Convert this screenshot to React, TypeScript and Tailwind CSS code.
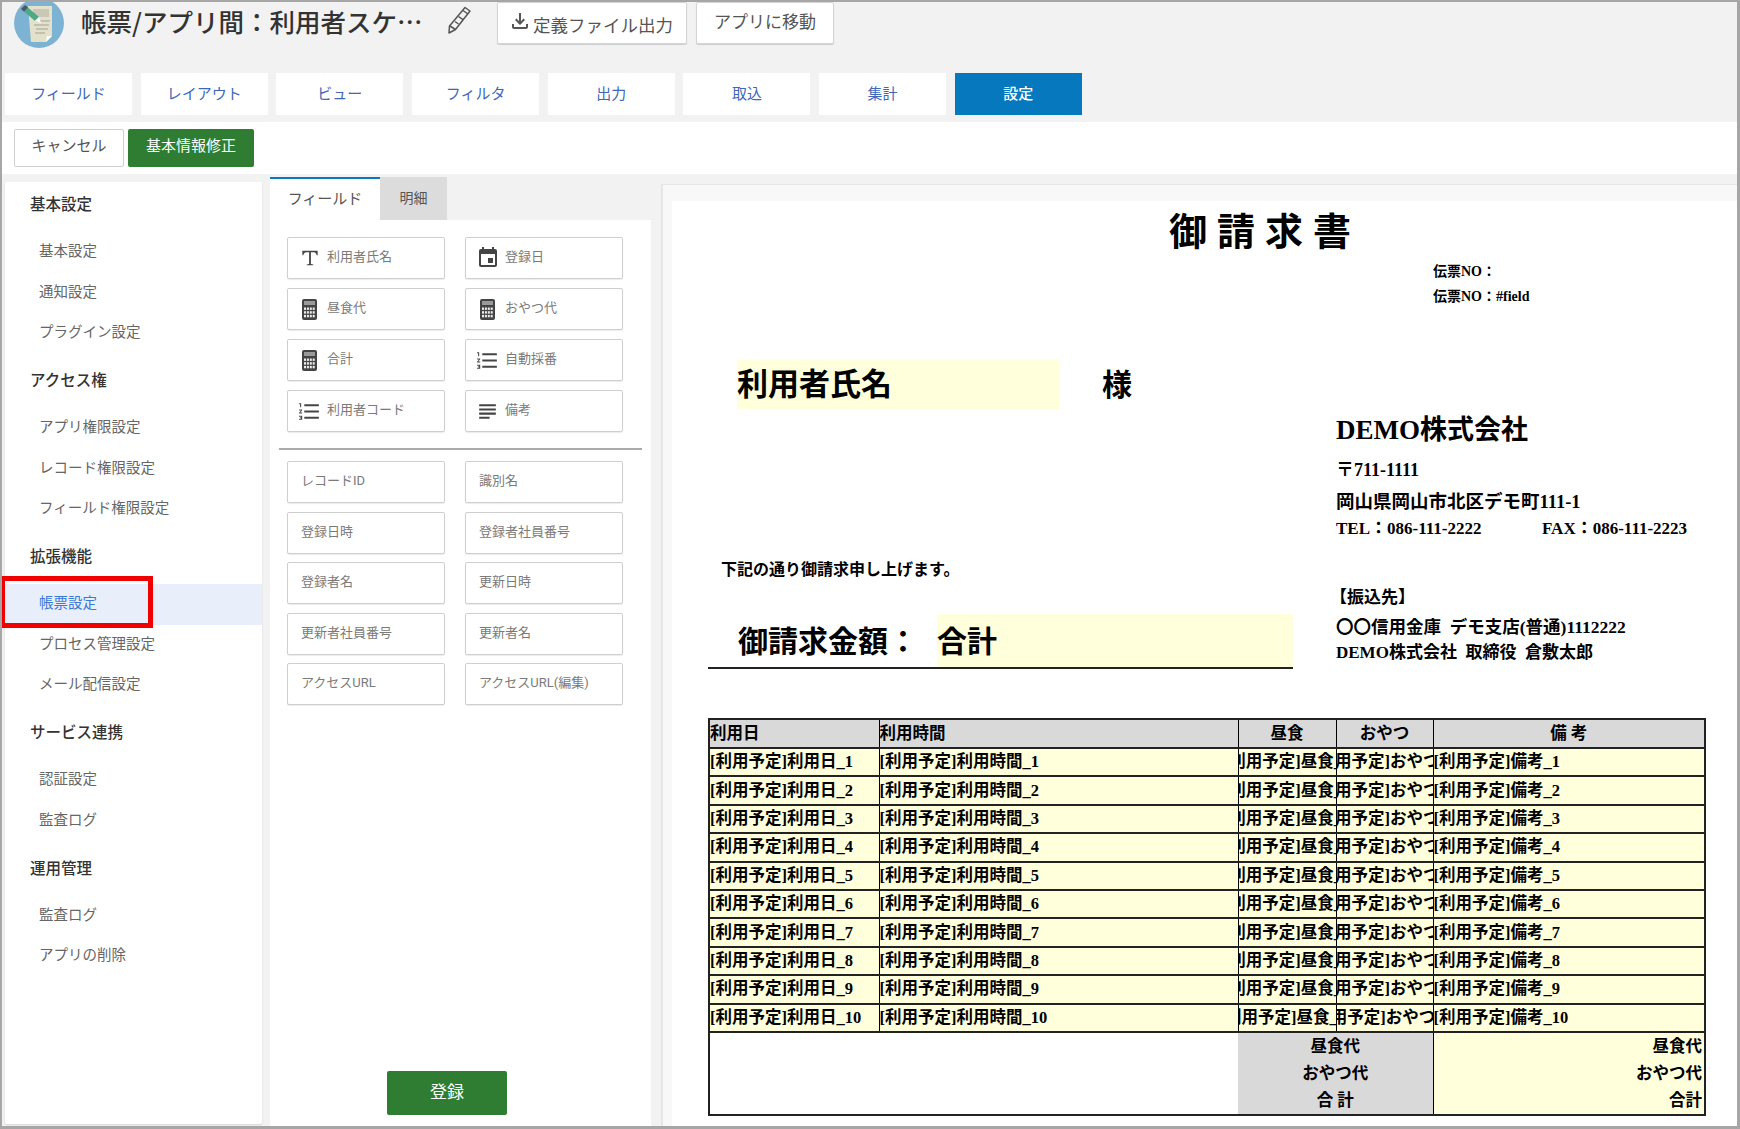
import { MdEvent, MdFormatListNumbered, MdOutlineFileDownload, MdSubject } from "react-icons/md";
import type { ReactNode } from "react";

const doc = "font-['Liberation_Serif','Noto_Sans_CJK_JP',serif] font-bold text-black";

const tabs = ["フィールド", "レイアウト", "ビュー", "フィルタ", "出力", "取込", "集計", "設定"];

const menu: { title: string; items: string[] }[] = [
  { title: "基本設定", items: ["基本設定", "通知設定", "プラグイン設定"] },
  { title: "アクセス権", items: ["アプリ権限設定", "レコード権限設定", "フィールド権限設定"] },
  { title: "拡張機能", items: ["帳票設定", "プロセス管理設定", "メール配信設定"] },
  { title: "サービス連携", items: ["認証設定", "監査ログ"] },
  { title: "運用管理", items: ["監査ログ", "アプリの削除"] },
];

function SerifT() {
  return (
    <svg viewBox="0 0 20 20" className="h-[18px] w-[18px]" fill="#444">
      <path d="M1.500 2h17v5h-1.100c-.3-2-1-3.500-3.400-3.500h-3v13.200l2.600.6V18H6.400v-.7l2.600-.6V3.500H6C3.600 3.500 2.900 5 2.600 7H1.500z" />
    </svg>
  );
}

function CalcIcon() {
  const dots = [0, 1, 2, 3].flatMap((c) => [0, 1, 2].map((r) => [2 + c * 2.9, 8.500 + r * 3.700]));
  return (
    <svg viewBox="0 0 15 21" className="h-[21px] w-[15px]">
      <rect width="15" height="21" rx="2" fill="#444" />
      <rect x="2" y="2" width="11" height="4" fill="#9a9a9a" />
      {dots.map(([x, y]) => (
        <rect key={`${x}-${y}`} x={x} y={y} width="2" height="2.400" fill="#eee" />
      ))}
    </svg>
  );
}

const numbered = <MdFormatListNumbered className="text-[25px] text-[#444]" />;

const typedFields: { label: string; icon: ReactNode }[] = [
  { label: "利用者氏名", icon: <SerifT /> },
  { label: "登録日", icon: <MdEvent className="text-[24px] text-[#444]" /> },
  { label: "昼食代", icon: <CalcIcon /> },
  { label: "おやつ代", icon: <CalcIcon /> },
  { label: "合計", icon: <CalcIcon /> },
  { label: "自動採番", icon: numbered },
  { label: "利用者コード", icon: numbered },
  { label: "備考", icon: <MdSubject className="text-[25px] text-[#444]" /> },
];

const systemFields = [
  "レコードID",
  "識別名",
  "登録日時",
  "登録者社員番号",
  "登録者名",
  "更新日時",
  "更新者社員番号",
  "更新者名",
  "アクセスURL",
  "アクセスURL(編集)",
];

function AppIcon() {
  return (
    <svg viewBox="0 0 50 50" className="h-[50px] w-[50px]">
      <circle cx="25" cy="25" r="25" fill="#7db3d2" />
      <path d="M14 8h24v30l-6 6H17z" fill="#e3e1cc" />
      <path d="M32 44l6-6h-5z" fill="#fff" />
      <rect x="19" y="11" width="16" height="8" fill="#c9c8b6" />
      <path d="M22 23h14M20 27h15M22 31h12M21 35h10" stroke="#a3a391" strokeWidth="1" />
      <path d="M7 11l4-4 14 12-4 4z" fill="#4fa886" />
      <path d="M7 11l4-4 3 2.500-4 4z" fill="#4a5a6a" />
      <path d="M21 23l4-4 2 6z" fill="#fff" />
    </svg>
  );
}

function PencilIcon() {
  return (
    <svg viewBox="0 0 26 30" className="h-[30px] w-[26px]" fill="none" stroke="#555" strokeWidth="1.500" strokeLinejoin="round">
      <path d="M19 2.500l5 3.500-14.500 18.500-6.500 3.500.5-7z" />
      <path d="M17 5.500l5 3.500M12.500 11.500l4.500 3.200M9 16.500l3.500 2.500M4 21l5.500 3.500" />
    </svg>
  );
}

function FieldButton({ label, icon }: { label: string; icon?: ReactNode }) {
  return (
    <div className="flex h-[42px] items-center rounded-[2px] border border-[#cfcfcf] bg-white text-[13px] text-[#7a7a7a] shadow-[0_1px_1px_rgba(0,0,0,0.08)]">
      {icon ? (
        <>
          <span className="flex w-[39px] shrink-0 items-center justify-center pl-[4px]">{icon}</span>
          <span className="-mt-[3px]">{label}</span>
        </>
      ) : (
        <span className="-mt-[2px] pl-[13px]">{label}</span>
      )}
    </div>
  );
}

function Sidebar() {
  return (
    <aside className="mt-[8px] mb-[2px] ml-[3px] w-[257px] shrink-0 rounded-[2px] bg-white pt-[1px] shadow-[0_1px_2px_rgba(0,0,0,0.12)]">
      {menu.map((group) => (
        <div key={group.title} className="mb-[5.500px]">
          <div className="flex h-[46px] items-center pl-[25px] text-[15.500px] font-medium text-[#333]">{group.title}</div>
          <ul className="mt-[3px]">
            {group.items.map((item) => {
              const active = item === "帳票設定";
              return (
                <li
                  key={item}
                  className={`relative flex h-[40.500px] items-center pl-[34px] text-[14.500px] ${
                    active ? "bg-[#e8effb] text-[#3b78d8]" : "text-[#666]"
                  }`}
                >
                  {item}
                  {active && (
                    <span className="absolute -left-[5px] -top-[8px] h-[52px] w-[153px] border-[5px] border-[#f00000]" />
                  )}
                </li>
              );
            })}
          </ul>
        </div>
      ))}
    </aside>
  );
}

function FieldPanel() {
  return (
    <section className="mt-[3px] ml-[8px] flex w-[381px] shrink-0 flex-col">
      <div className="flex h-[43px] shrink-0">
        <div className="flex w-[110px] items-center justify-center border-t-2 border-[#0a78be] bg-white text-[15px] text-[#555]">
          フィールド
        </div>
        <div className="flex w-[67px] items-center justify-center bg-[#dcdcdc] text-[14px] text-[#555]">明細</div>
      </div>
      <div className="flex flex-1 flex-col bg-white pt-[17px]">
        <div className="ml-[17px] grid w-[336px] grid-cols-2 gap-x-[20px] gap-y-[9px]">
          {typedFields.map((f) => (
            <FieldButton key={f.label} label={f.label} icon={f.icon} />
          ))}
        </div>
        <div className="mx-[9px] mt-[16px] h-[2px] bg-[#aaaaaa]" />
        <div className="mt-[11px] ml-[17px] grid w-[336px] grid-cols-2 gap-x-[20px] gap-y-[8.500px]">
          {systemFields.map((f) => (
            <FieldButton key={f} label={f} />
          ))}
        </div>
        <button className="mt-auto mb-[11px] ml-[117px] h-[44px] w-[120px] rounded-[2px] bg-[#2e7d32] text-[17px] text-white">
          登録
        </button>
      </div>
    </section>
  );
}

const scheduleRows = Array.from({ length: 10 }, (_, i) => i + 1);

function ClipCell({ text }: { text: string }) {
  return (
    <td className="border-x border-y-2 border-x-black border-y-[#222] p-0">
      <div className="flex justify-center overflow-hidden whitespace-nowrap">
        <span className="shrink-0">{text}</span>
      </div>
    </td>
  );
}

function InvoiceTable() {
  const cell = "border-x border-y-2 border-x-black border-y-[#222] p-0 whitespace-nowrap overflow-hidden";
  return (
    <table className="ml-[36px] w-[996px] table-fixed border-collapse border-2 border-[#222] text-[16.500px] leading-[20px]">
      <colgroup>
        <col className="w-[170px]" />
        <col className="w-[359px]" />
        <col className="w-[98px]" />
        <col className="w-[97px]" />
        <col className="w-[272px]" />
      </colgroup>
      <thead>
        <tr className="h-[29px] bg-[#d9d9d9]">
          <th className={`${cell} text-left`}>利用日</th>
          <th className={`${cell} text-left`}>利用時間</th>
          <th className={`${cell} text-center`}>昼食</th>
          <th className={`${cell} text-center`}>おやつ</th>
          <th className={`${cell} text-center`}>備 考</th>
        </tr>
      </thead>
      <tbody>
        {scheduleRows.map((n) => (
          <tr key={n} className="h-[28.400px] bg-[#ffffdc]">
            <td className={cell}>[利用予定]利用日_{n}</td>
            <td className={cell}>[利用予定]利用時間_{n}</td>
            <ClipCell text={`[利用予定]昼食_${n}`} />
            <ClipCell text={`[利用予定]おやつ_${n}`} />
            <td className={cell}>[利用予定]備考_{n}</td>
          </tr>
        ))}
        <tr className="h-[82px]">
          <td colSpan={2} className="bg-white p-0" />
          <td colSpan={2} className="bg-[#d9d9d9] p-0 text-center leading-[27px]">
            <div>昼食代</div>
            <div>おやつ代</div>
            <div>合 計</div>
          </td>
          <td className="border-l border-black bg-[#ffffdc] p-0 pr-[2px] text-right leading-[27px]">
            <div>昼食代</div>
            <div>おやつ代</div>
            <div>合計</div>
          </td>
        </tr>
      </tbody>
    </table>
  );
}

function InvoicePreview() {
  return (
    <section className="mt-[10px] ml-[10px] flex-1 border-t border-l-2 border-[#e6e6e6] bg-[#f8f8f8] pt-[16px] pl-[9px]">
      <div className={`h-full bg-white ${doc}`}>
        <h1 className="h-[58px] pl-[497px] text-[38px] leading-[62px] tracking-[10px]">御請求書</h1>
        <div className="pl-[761px] text-[14px] leading-[25px]">
          <div>伝票NO：</div>
          <div>伝票NO：#field</div>
        </div>

        <div className="mt-[51px] ml-[65px] flex text-[31px] leading-[49px]">
          <div className="h-[49px] w-[323px] bg-[#ffffdc]">利用者氏名</div>
          <div className="ml-[42px] text-[30px]">様</div>
        </div>

        <div className="flex h-[260px]">
          <div className="w-[664px]">
            <div className="mt-[149px] pl-[49px] text-[16px] leading-[24px]">下記の通り御請求申し上げます。</div>
            <div className="mt-[32px] ml-[36px] flex h-[55px] w-[585px] border-b-2 border-[#222] text-[30px] leading-[56px]">
              <div className="w-[229px] pl-[30px]">御請求金額：</div>
              <div className="flex-1 bg-[#ffffdc]">合計</div>
            </div>
          </div>
          <div>
            <div className="text-[27px] leading-[42px]">DEMO株式会社</div>
            <div className="text-[18px] leading-[38px]">〒711-1111</div>
            <div className="text-[18.500px] leading-[26px]">岡山県岡山市北区デモ町111-1</div>
            <div className="flex text-[17px] leading-[28px]">
              <span className="w-[206px]">TEL：086-111-2222</span>
              <span>FAX：086-111-2223</span>
            </div>
            <div className="mt-[41px] -ml-[6px] text-[17px] leading-[28px]">【振込先】</div>
            <div className="text-[17.500px] leading-[30px] whitespace-pre">〇〇信用金庫  デモ支店(普通)1112222</div>
            <div className="text-[17px] leading-[22px] whitespace-pre">DEMO株式会社  取締役  倉敷太郎</div>
          </div>
        </div>

        <div className="h-[49px]" />
        <InvoiceTable />
      </div>
    </section>
  );
}

export default function App() {
  return (
    <div className="flex h-[1129px] w-[1740px] flex-col overflow-hidden border-t-2 border-r-[3px] border-b-[3px] border-l-2 border-[#a6a6a6] bg-[#f2f2f2] font-['Roboto','Noto_Sans_CJK_JP',sans-serif]">
      <header className="flex h-[71px] shrink-0 items-start pl-[12px]">
        <div className="-mt-[4px]">
          <AppIcon />
        </div>
        <h1 className="mt-[1px] ml-[17px] w-[347px] font-['Noto_Sans_CJK_JP',sans-serif] text-[25.500px] leading-[36px] font-medium whitespace-nowrap text-[#333]">
          帳票/アプリ間：利用者スケ…
        </h1>
        <span className="mt-[3px] ml-[18px]">
          <PencilIcon />
        </span>
        <button className="ml-[25px] flex h-[42px] w-[190px] items-start rounded-[2px] border border-[#d4d4d4] bg-white pt-[7px] pl-[10px] text-[17.500px] leading-[32px] text-[#555] shadow-[0_1px_1px_rgba(0,0,0,0.15)]">
          <MdOutlineFileDownload className="mt-[-1px] mr-[1px] text-[24px]" />
          定義ファイル出力
        </button>
        <button className="ml-[9px] h-[42px] w-[138px] rounded-[2px] border border-[#d4d4d4] bg-white text-[17px] text-[#555] shadow-[0_1px_1px_rgba(0,0,0,0.15)]">
          アプリに移動
        </button>
      </header>

      <nav className="flex h-[42px] shrink-0 gap-[8.700px] pl-[3px]">
        {tabs.map((t) =>
          t === "設定" ? (
            <div key={t} className="flex w-[127px] items-center justify-center bg-[#0679be] text-[15px] font-medium text-white">
              {t}
            </div>
          ) : (
            <div key={t} className="flex w-[127px] items-center justify-center bg-white text-[15px] text-[#4068b8]">
              {t}
            </div>
          ),
        )}
      </nav>

      <div className="mt-[7px] flex h-[52px] shrink-0 items-center gap-[4px] bg-white pl-[12px]">
        <button className="h-[38px] w-[110px] rounded-[2px] border border-[#cfcfcf] bg-white pb-[3px] text-[15px] text-[#555]">
          キャンセル
        </button>
        <button className="h-[38px] w-[126px] rounded-[2px] bg-[#2e7d32] pb-[3px] text-[15px] text-white">基本情報修正</button>
      </div>

      <main className="flex min-h-0 flex-1">
        <Sidebar />
        <FieldPanel />
        <InvoicePreview />
      </main>
    </div>
  );
}
